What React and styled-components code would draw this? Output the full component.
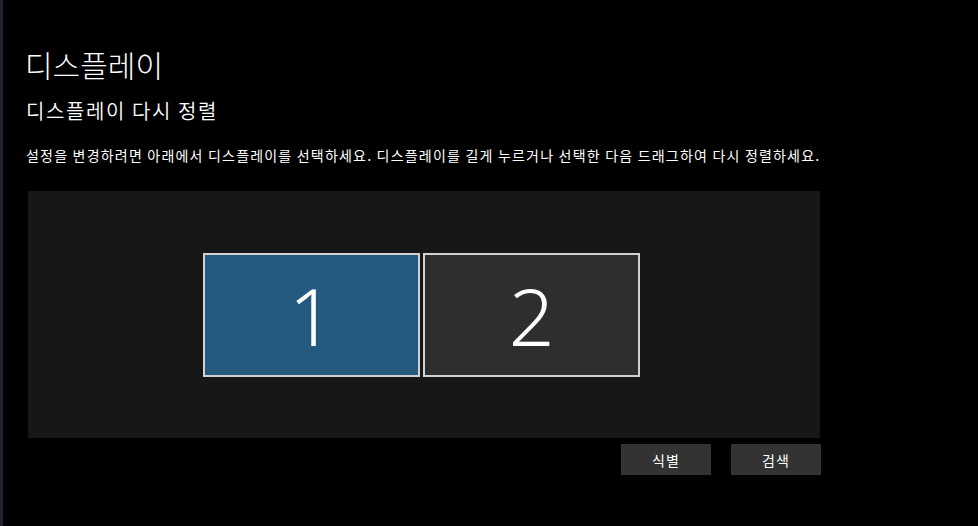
import React from 'react'
import styled, { createGlobalStyle } from 'styled-components'

const Global = createGlobalStyle`
  html, body {
    margin: 0;
    padding: 0;
    background: #000;
  }
  body {
    font-family: "Noto Sans CJK KR", "Noto Sans", sans-serif;
    color: #fff;
  }
`

const Page = styled.div`
  display: flex;
  width: 978px;
  height: 526px;
  background: #000;
  overflow: hidden;
`

const Edge = styled.div`
  width: 3px;
  background: #22222d;
  flex-shrink: 0;
`

const Content = styled.div`
  padding: 44px 0 0 22px;
  display: flex;
  flex-direction: column;
`

const Title = styled.h1`
  margin: 0;
  font-size: 30px;
  font-weight: 300;
  line-height: 40px;
`

const Subtitle = styled.h2`
  margin: 13px 0 0 1px;
  font-size: 20px;
  font-weight: 350;
  letter-spacing: 1.6px;
  line-height: 27px;
`

const Desc = styled.p`
  margin: 22px 0 0 1px;
  font-size: 14px;
  letter-spacing: 1.2px;
  line-height: 18px;
  white-space: nowrap;
`

const Canvas = styled.div`
  margin: 27px 0 0 3px;
  width: 792px;
  height: 247px;
  background: #171717;
  display: flex;
  align-items: center;
  justify-content: center;
  gap: 3px;
  padding-right: 5px;
  box-sizing: border-box;
`

const Monitor = styled.div`
  width: 217px;
  height: 124px;
  box-sizing: border-box;
  border: 2px solid #d2d2d2;
  background: ${p => (p.$active ? '#245a80' : '#2e2e2e')};
  display: flex;
  align-items: center;
  justify-content: center;
  font-family: "Noto Sans", "Open Sans", sans-serif;
  font-weight: 300;
  font-size: 80px;
  line-height: 1;
  color: #fff;
`

const Actions = styled.div`
  display: flex;
  justify-content: flex-end;
  gap: 20px;
  width: 793px;
  margin: 6px 0 0 3px;
`

const Button = styled.button`
  width: 90px;
  height: 31px;
  border: none;
  background: #333;
  color: #fff;
  font-family: "Noto Sans CJK KR", sans-serif;
  font-size: 14px;
  letter-spacing: 1px;
  padding: 0;
`

export default function App() {
  return (
    <Page>
      <Global />
      <Edge />
      <Content>
        <Title>디스플레이</Title>
        <Subtitle>디스플레이 다시 정렬</Subtitle>
        <Desc>
          설정을 변경하려면 아래에서 디스플레이를 선택하세요. 디스플레이를 길게 누르거나 선택한 다음 드래그하여 다시 정렬하세요.
        </Desc>
        <Canvas>
          <Monitor $active>1</Monitor>
          <Monitor>2</Monitor>
        </Canvas>
        <Actions>
          <Button>식별</Button>
          <Button>검색</Button>
        </Actions>
      </Content>
    </Page>
  )
}
